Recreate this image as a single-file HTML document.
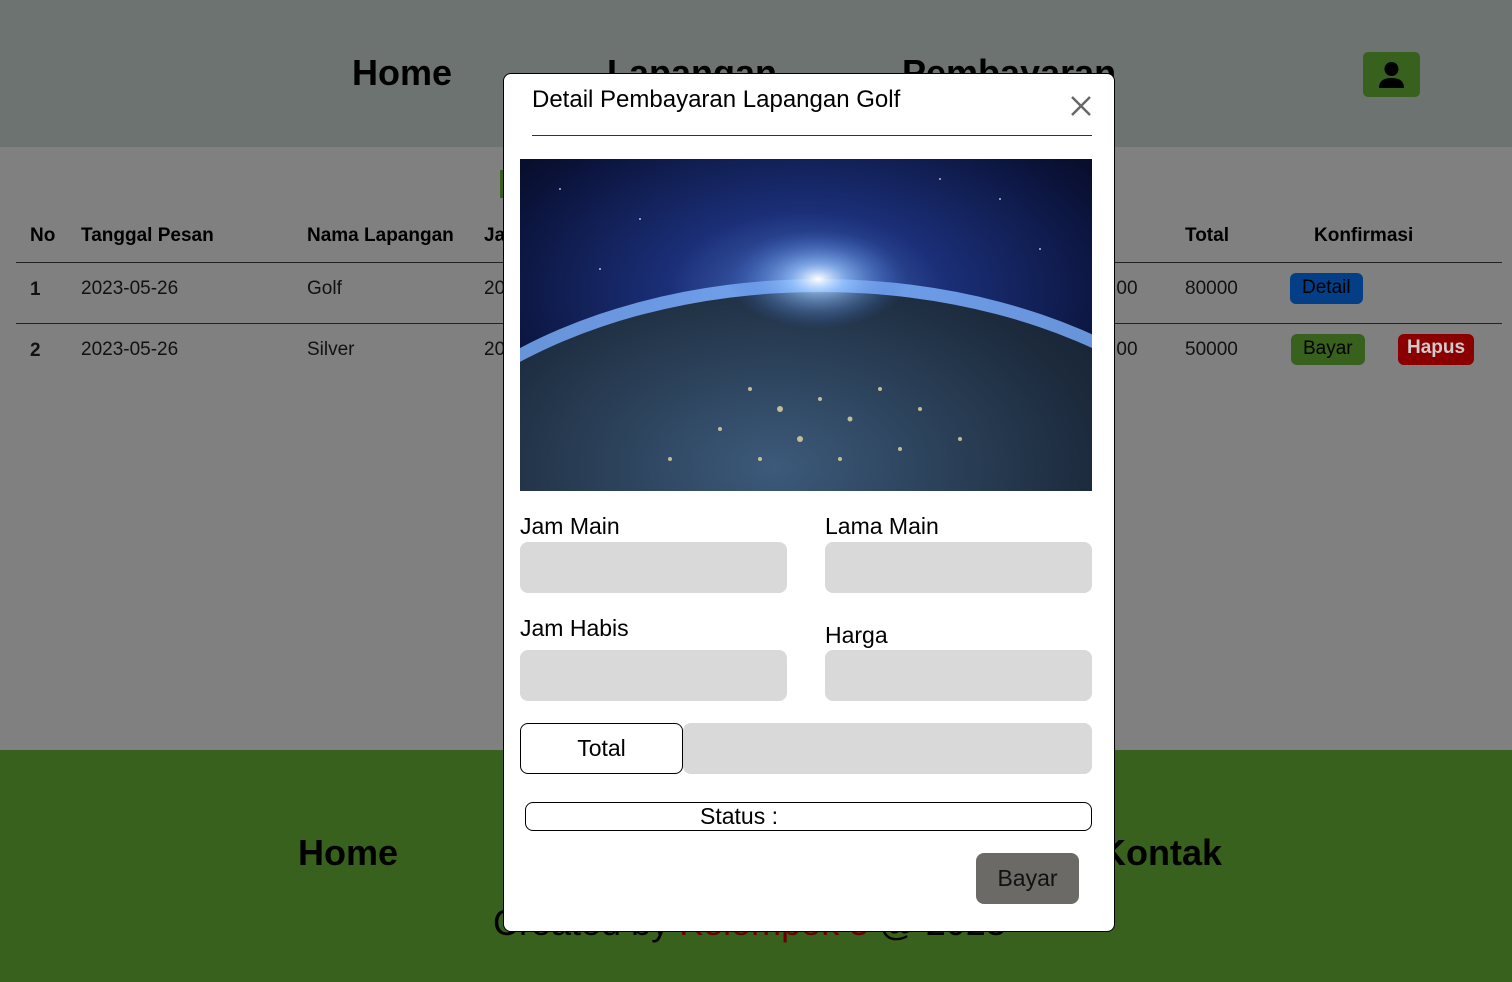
<!DOCTYPE html>
<html><head><meta charset="utf-8"><style>
*{box-sizing:border-box;margin:0;padding:0}
body{width:1512px;height:982px;position:relative;overflow:hidden;font-family:"Liberation Sans",sans-serif;background:#808080;color:#000}
.hdr{position:absolute;left:0;top:0;width:1512px;height:147px;background:#6d7371}
.nav{position:absolute;top:52px;font-size:36px;font-weight:bold}
.user{position:absolute;left:1363px;top:52px;width:57px;height:45px;background:#37611c;border-radius:5px}
.th{position:absolute;top:225px;font-size:19px;font-weight:bold}
.td{position:absolute;font-size:19px;color:#111}
.line{position:absolute;left:16px;width:1486px;height:1px;background:#222}
.btn{position:absolute;height:31px;border-radius:6px;font-size:19px;padding:4px 12px}
.foot{position:absolute;left:0;top:750px;width:1512px;height:232px;background:#37611c}
.fn{position:absolute;top:832px;font-size:36px;font-weight:bold}
.modal{position:absolute;left:503px;top:73px;width:612px;height:859px;background:#fff;border:1px solid #000;border-radius:8px}
.lbl{position:absolute;font-size:23px}
.inp{position:absolute;width:267px;height:51px;background:#d9d9d9;border-radius:8px}
</style></head><body>
<div class="hdr">
<div class="nav" style="left:352px">Home</div>
<div class="nav" style="left:607px">Lapangan</div>
<div class="nav" style="left:902px">Pembayaran</div>
<div class="user"><svg width="57" height="45" viewBox="0 0 57 45"><circle cx="28.5" cy="17" r="7" fill="#000"/><path d="M16 36 Q16 26 28.5 26 Q41 26 41 36 Z" fill="#000"/></svg></div>
</div>
<div style="position:absolute;left:500px;top:170px;width:4px;height:28px;background:#37611c"></div>
<div class="th" style="left:30px">No</div>
<div class="th" style="left:81px">Tanggal Pesan</div>
<div class="th" style="left:307px">Nama Lapangan</div>
<div class="th" style="left:484px">Jam Main</div>
<div class="th" style="left:1185px">Total</div>
<div class="th" style="left:1314px">Konfirmasi</div>
<div class="line" style="top:262px"></div>
<div class="line" style="top:323px"></div>
<div class="td" style="left:30px;top:279px;font-weight:bold">1</div>
<div class="td" style="left:81px;top:278px">2023-05-26</div>
<div class="td" style="left:307px;top:278px">Golf</div>
<div class="td" style="left:484px;top:278px">20</div>
<div class="td" style="left:1090px;top:278px">12:00</div>
<div class="td" style="left:1185px;top:278px">80000</div>
<div class="btn" style="left:1290px;top:273px;background:#033e86">Detail</div>
<div class="td" style="left:30px;top:340px;font-weight:bold">2</div>
<div class="td" style="left:81px;top:339px">2023-05-26</div>
<div class="td" style="left:307px;top:339px">Silver</div>
<div class="td" style="left:484px;top:339px">20</div>
<div class="td" style="left:1090px;top:339px">12:00</div>
<div class="td" style="left:1185px;top:339px">50000</div>
<div class="btn" style="left:1291px;top:334px;background:#37611c">Bayar</div>
<div class="btn" style="left:1398px;top:334px;background:#8a0000;color:#ccc;font-weight:bold;padding:3px 9px">Hapus</div>
<div class="foot"></div>
<div class="fn" style="left:298px">Home</div>
<div class="fn" style="left:600px">Lapangan</div>
<div class="fn" style="left:1100px">Kontak</div>
<div style="position:absolute;left:493px;top:902px;font-size:36px">Created by <span style="color:#6a0000">Kelompok 5</span> @ 2023</div>

<div class="modal">
<div style="position:absolute;left:28px;top:12px;font-size:24px">Detail Pembayaran Lapangan Golf</div>
<svg style="position:absolute;left:566px;top:21px" width="22" height="22" viewBox="0 0 22 22"><path d="M2 2L20 20M20 2L2 20" stroke="#666" stroke-width="2.4"/></svg>
<div style="position:absolute;left:28px;top:61px;width:560px;height:1px;background:#333"></div>
<svg style="position:absolute;left:16px;top:85px" width="572" height="332" viewBox="0 0 572 332">
<defs>
<radialGradient id="sky" cx="0.5" cy="0.4" r="0.8"><stop offset="0" stop-color="#4a6fc0"/><stop offset="0.3" stop-color="#1b2f78"/><stop offset="0.7" stop-color="#0a1238"/><stop offset="1" stop-color="#02040e"/></radialGradient>
<radialGradient id="glow" cx="0.5" cy="0.5" r="0.5"><stop offset="0" stop-color="#fff"/><stop offset="0.3" stop-color="#9bc8ff" stop-opacity="0.7"/><stop offset="1" stop-color="#3060c0" stop-opacity="0"/></radialGradient>
<radialGradient id="earth" cx="0.45" cy="0.3" r="0.7"><stop offset="0" stop-color="#3c5a7a"/><stop offset="0.5" stop-color="#1c2a3c"/><stop offset="1" stop-color="#0a0f18"/></radialGradient>
</defs>
<rect width="572" height="332" fill="url(#sky)"/>
<ellipse cx="300" cy="420" rx="470" ry="300" fill="#7fb4ff" opacity="0.8"/>
<ellipse cx="300" cy="425" rx="462" ry="292" fill="url(#earth)"/>
<ellipse cx="298" cy="120" rx="90" ry="50" fill="url(#glow)"/>
<g fill="#e8d9a0" opacity="0.8">
<circle cx="230" cy="230" r="2"/><circle cx="260" cy="250" r="3"/><circle cx="300" cy="240" r="2"/><circle cx="330" cy="260" r="2.5"/><circle cx="200" cy="270" r="2"/><circle cx="280" cy="280" r="3"/><circle cx="360" cy="230" r="2"/><circle cx="400" cy="250" r="2"/><circle cx="150" cy="300" r="2"/><circle cx="320" cy="300" r="2"/><circle cx="440" cy="280" r="2"/><circle cx="240" cy="300" r="2"/><circle cx="380" cy="290" r="2"/>
</g>
<g fill="#fff" opacity="0.7"><circle cx="40" cy="30" r="1"/><circle cx="120" cy="60" r="1"/><circle cx="480" cy="40" r="1"/><circle cx="520" cy="90" r="1"/><circle cx="80" cy="110" r="1"/><circle cx="420" cy="20" r="1"/></g>
</svg>
<div class="lbl" style="left:16px;top:439px">Jam Main</div>
<div class="lbl" style="left:321px;top:439px">Lama Main</div>
<div class="inp" style="left:16px;top:468px"></div>
<div class="inp" style="left:321px;top:468px"></div>
<div class="lbl" style="left:16px;top:541px">Jam Habis</div>
<div class="lbl" style="left:321px;top:548px">Harga</div>
<div class="inp" style="left:16px;top:576px"></div>
<div class="inp" style="left:321px;top:576px"></div>
<div style="position:absolute;left:179px;top:649px;width:409px;height:51px;background:#d9d9d9;border-radius:8px"></div>
<div style="position:absolute;left:16px;top:649px;width:163px;height:51px;border:1px solid #000;border-radius:8px;background:#fff;font-size:23px;text-align:center;line-height:49px">Total</div>
<div style="position:absolute;left:21px;top:728px;width:567px;height:29px;border:1px solid #000;border-radius:8px;font-size:23px;line-height:27px;padding-left:174px">Status :</div>
<div style="position:absolute;left:472px;top:779px;width:103px;height:51px;background:#6b6a67;border-radius:8px;font-size:23px;text-align:center;line-height:51px;color:#111">Bayar</div>
</div>
</body></html>
